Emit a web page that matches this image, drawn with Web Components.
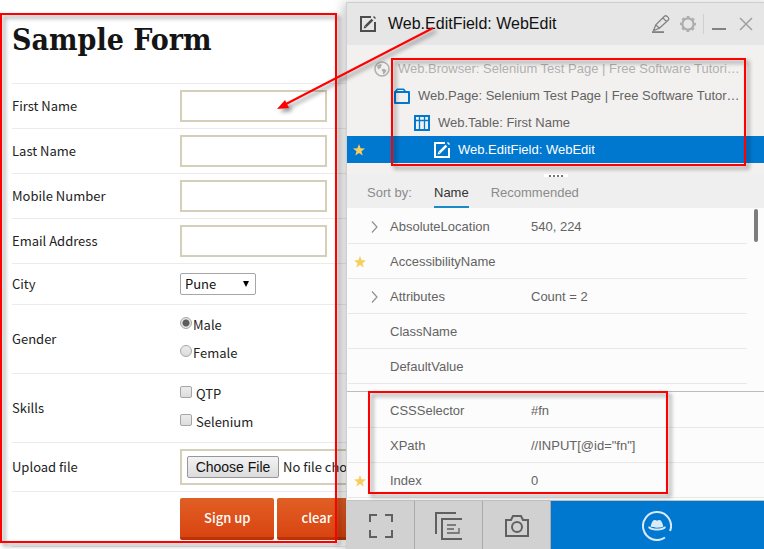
<!DOCTYPE html>
<html lang="en">
<head>
<meta charset="utf-8">
<title>Sample Form</title>
<style>
body { margin: 0; }
</style>
</head>
<body>
<app-desktop>
  <sample-form slot="page">
    <form-row label="First Name"><text-field name="First Name"></text-field></form-row>
    <form-row label="Last Name"><text-field name="Last Name"></text-field></form-row>
    <form-row label="Mobile Number"><text-field name="Mobile Number"></text-field></form-row>
    <form-row label="Email Address"><text-field name="Email Address"></text-field></form-row>
    <form-row label="City"><city-select></city-select></form-row>
    <form-row label="Gender"><choice-group kind="radio" options="Male,Female" checked="Male"></choice-group></form-row>
    <form-row label="Skills"><choice-group kind="checkbox" options="QTP,Selenium"></choice-group></form-row>
    <form-row label="Upload file"><file-field></file-field></form-row>
    <form-row><action-button>Sign up</action-button><action-button>clear</action-button></form-row>
  </sample-form>
  <spy-window slot="tool">
    <spy-header slot="header">Web.EditField: WebEdit</spy-header>
    <object-tree slot="tree">
      <tree-item icon="globe" level="0" faded>Web.Browser: Selenium Test Page | Free Software Tutorials</tree-item>
      <tree-item icon="page" level="1">Web.Page: Selenium Test Page | Free Software Tutorials</tree-item>
      <tree-item icon="table" level="2">Web.Table: First Name</tree-item>
      <tree-item icon="edit" level="3" selected>Web.EditField: WebEdit</tree-item>
    </object-tree>
    <sort-bar slot="sort"></sort-bar>
    <property-list slot="list" kind="all"></property-list>
    <property-list slot="pinned" kind="pinned"></property-list>
    <spy-footer slot="footer"></spy-footer>
  </spy-window>
  <callout-marks slot="marks"></callout-marks>
</app-desktop>

<script>
const ICONS = {
  edit: `<svg viewBox="0 0 16 16" width="16" height="16" fill="none" stroke="currentColor" stroke-width="2"><path d="M11 1H1v14h14V6"/><path d="M5.6 10.4 12.4 3.6" stroke-width="2.6"/><path d="M3.6 12.6l.8-3 2.2 2.2z" fill="currentColor" stroke="none"/><path d="M13 1l2 2 1-1-2-2z" fill="currentColor" stroke="none"/></svg>`,
  globe: `<svg viewBox="0 0 16 16" width="16" height="16"><circle cx="8" cy="8" r="7" fill="none" stroke="currentColor" stroke-width="1.6"/><path d="M3.2 4.6 6.6 3l1.6 1-1.4 1.2.6 1.2-2 1.2-.2 1.2-1.8-1.6zM8 8l2.4-.2 2.2 1.8-1.6 2.6-2 1.2-.2-2.6L7.6 9.4z" fill="currentColor"/></svg>`,
  page: `<svg viewBox="0 0 16 16" width="16" height="16" fill="none" stroke="currentColor" stroke-width="2" stroke-linejoin="round"><path d="M1 4v11h14V4z"/><path d="M1 4 3.4 1.2h6.2L11.6 4" stroke-width="1.6"/></svg>`,
  table: `<svg viewBox="0 0 16 16" width="16" height="16" fill="none" stroke="currentColor"><path d="M1 1h14v14H1z" stroke-width="2"/><path d="M1 5.5h14M5.5 2v13M10.5 2v13" stroke-width="1.3"/></svg>`,
  star: `<svg viewBox="0 0 12 12" width="12" height="12"><path d="M6 0l1.6 4.2 4.4.2-3.5 2.8L9.7 11.6 6 9.1 2.3 11.6l1.2-4.4L0 4.4l4.4-.2z" fill="#f7cd5b"/></svg>`,
  chevron: `<svg viewBox="0 0 7 12" width="7" height="12" fill="none" stroke="#909090" stroke-width="1.2"><path d="M1 0.5 6 6 1 11.5"/></svg>`,
  pencil: `<svg viewBox="0 0 18 18" width="18" height="18" fill="none" stroke="#828282" stroke-width="1.3"><path d="M1.6 15.6l2.2-5.8L12.4 1.2q1.4-1 2.7.2l1 1q1.2 1.3.2 2.7L7.4 13.3zM10.8 2.9l3.9 3.9M3.8 9.9l3.6 3.4"/><path d="M0 17.1h12" stroke-width="1.8"/></svg>`,
  gear: `<svg viewBox="0 0 16 16" width="16" height="16" fill="none" stroke="#adadad"><circle cx="8" cy="8" r="5.6" stroke-width="2.2"/><circle cx="8" cy="8" r="7.1" stroke-width="1.8" stroke-dasharray="2.8 2.776" stroke-dashoffset="1.4"/></svg>`,
  minimize: `<svg viewBox="0 0 14 14" width="14" height="14"><path d="M0 12h14" stroke="#828282" stroke-width="2"/></svg>`,
  close: `<svg viewBox="0 0 14 14" width="14" height="14"><path d="M1 1l12 12M13 1 1 13" stroke="#a2a2a2" stroke-width="1.6"/></svg>`,
  expand: `<svg viewBox="0 0 24 24" width="24" height="24" fill="none" stroke="#606060" stroke-width="2"><path d="M1 8V1h7M16 1h7v7M23 16v7h-7M8 23H1v-7"/></svg>`,
  copies: `<svg viewBox="0 0 28 28" width="28" height="28" fill="none" stroke="#606060" stroke-width="2"><path d="M21 1H1v21M27 7H7v20h20"/><path d="M12 13h9M12 17h7M12 21h9M24 16v5h-3" stroke-width="1.3"/></svg>`,
  camera: `<svg viewBox="0 0 24 22" width="24" height="22" fill="none" stroke="#606060" stroke-width="2"><path d="M1 5h5l2-4h8l2 4h5v16H1z"/><circle cx="12" cy="12" r="5"/></svg>`,
  hat: `<svg viewBox="0 0 30 30" width="30" height="30" fill="#d8e9f7"><path d="M23 26.5A14 14 0 1 1 28.1 20" fill="none" stroke="#d8e9f7" stroke-width="2"/><path d="M8.6 15.5c1-3.5 1.9-6.5 3.900-6.500 1 0 1.500.6 2.500.6s1.500-.6 2.500-.6c2 0 2.900 3 3.900 6.500-3 1.600-9.800 1.600-12.800 0z"/><path d="M6.300 16.500c-.3-1 .8-1.200 2-.5 3.500 2 9.900 2 13.400 0 1.200-.7 2.300-.5 2 .5-.8 4-16.600 4-17.400 0z"/></svg>`
};

const UI_FONT = `"Liberation Sans", Arial, sans-serif`;
const FORM_FONT = `"Noto Sans CJK SC", "Noto Sans", sans-serif`;

function define(name, css, html, setup) {
  const template = document.createElement('template');
  template.innerHTML = `<style>*{box-sizing:border-box}svg{display:block;flex:none}${css}</style>${html}`;
  customElements.define(name, class extends HTMLElement {
    constructor() {
      super();
      this.attachShadow({ mode: 'open' }).append(template.content.cloneNode(true));
    }
    connectedCallback() {
      if (setup && !this.ready) { this.ready = true; setup(this, this.shadowRoot); }
    }
  });
}

define('app-desktop', `
  :host { display: grid; position: relative; grid-template-columns: minmax(0, 346fr) minmax(0, 418fr); min-height: 100vh; overflow: hidden; background: #fff; }
  .tool { display: grid; position: relative; padding-top: 2px; }
  .page { min-width: 0; }
`, `<div class="page"><slot name="page"></slot></div><div class="tool"><slot name="tool"></slot></div><slot name="marks"></slot>`);

/* ---------- form ---------- */
define('sample-form', `
  :host { display: block; padding: 16px 0 0 12px; color: #222; font: 13px/28px ${FORM_FONT}; }
  h1 { margin: 0; height: 67px; font: bold 30px/48px "DejaVu Serif Condensed", "DejaVu Serif", serif; color: #151515; white-space: nowrap; }
`, `<h1>Sample Form</h1><form><slot></slot></form>`);

define('form-row', `
  :host { display: grid; grid-template-columns: 168px 1fr; align-items: center; border-top: 1px solid #ebebeb; padding: 6px 0; }
  :host(:last-of-type) { border-bottom: 1px solid #ebebeb; }
  .controls { display: flex; gap: 3px; min-width: 0; }
`, `<span class="label"></span><div class="controls"><slot></slot></div>`,
  (host, root) => { root.querySelector('.label').textContent = host.getAttribute('label') || ''; });

define('text-field', `
  :host { display: block; }
  input { display: block; width: 147px; height: 32px; border: 2px solid #d3cfb9; background: #fff; padding: 4px 8px; font: inherit; }
`, `<input type="text">`,
  (host, root) => { root.querySelector('input').setAttribute('aria-label', host.getAttribute('name')); });

define('city-select', `
  :host { display: grid; width: 76px; height: 22px; align-items: center; }
  select, svg { grid-area: 1 / 1; }
  select { appearance: none; width: 76px; height: 22px; padding: 0 4px; border: 1px solid #a6a6a6; border-radius: 2px; background: #fff; color: #111; font: 13px/20px ${FORM_FONT}; }
  svg { justify-self: end; margin-right: 6px; pointer-events: none; }
`, `<select aria-label="City"><option>Pune</option></select><svg viewBox="0 0 8 6" width="8" height="6"><path d="M1 0h6L4 6z" fill="#000"/></svg>`);

define('choice-group', `
  :host { display: grid; }
  label { display: flex; align-items: center; height: 28px; }
  input { appearance: none; flex: none; width: 12px; height: 12px; margin: 0 1px 4px 0; border: 1px solid #a6a6a6; background: linear-gradient(#ececec, #dcdcdc); }
  input[type=radio] { border-radius: 50%; }
  input[type=radio]:checked { background: radial-gradient(circle, #5c5c5c 0 3px, #e4e4e4 4px); }
  input[type=checkbox] { border-radius: 2px; margin-right: 4px; }
`, ``, (host, root) => {
  for (const option of host.getAttribute('options').split(',')) {
    const label = document.createElement('label');
    const input = document.createElement('input');
    input.type = host.getAttribute('kind');
    input.name = 'choice';
    input.checked = option === host.getAttribute('checked');
    const text = document.createElement('span');
    text.textContent = option;
    label.append(input, text);
    root.append(label);
  }
});

define('file-field', `
  :host { display: block; }
  input { display: block; width: 240px; height: 36px; padding: 5px; border: 2px solid #d3cfb9; background: #fff; color: #222; font: 13px/22px ${FORM_FONT}; }
  input::file-selector-button { width: 92px; height: 22px; margin: 0 4px 0 0; padding: 0; border: 1px solid #979797; border-radius: 2px; background: linear-gradient(#f3f3f3, #dcdcdc); color: #111; font: 14px/20px ${UI_FONT}; }
`, `<input type="file" aria-label="Upload file">`);

define('action-button', `
  :host { display: block; flex: none; }
  button { display: block; height: 42px; padding: 0 24px; border: 0; border-bottom: 3px solid #b93407; border-radius: 2px; background: linear-gradient(#e15f24, #d94411); color: #fff; font: 500 13px/39px ${FORM_FONT}; white-space: nowrap; }
`, `<button type="button"><slot></slot></button>`);

/* ---------- inspector ---------- */
define('spy-window', `
  :host { display: flex; flex-direction: column; min-width: 0; border: solid #cfcfcf; border-width: 1px 0 0 1px; background: #fcfcfc; box-shadow: 0 4px 10px 3px rgba(0,0,0,.22); color: #636363; font: 13px/16px ${UI_FONT}; }
  slot[name=list]::slotted(*) { flex: 1; }
`, `<slot name="header"></slot><slot name="tree"></slot><slot name="sort"></slot><slot name="list"></slot><slot name="pinned"></slot><slot name="footer"></slot>`);

define('spy-header', `
  :host { display: flex; align-items: center; height: 42px; padding: 0 11px 0 13px; background: #e6e6e6; color: #4d4d4d; }
  h2 { flex: 1; margin: 0 0 0 12px; color: #111; font: 16px/20px ${UI_FONT}; white-space: nowrap; }
  button { display: block; border: 0; padding: 0; background: none; }
  .pencil { margin-right: 10px; }
  .gear { margin-right: 7px; }
  .divider { width: 1px; height: 20px; margin-right: 8px; background: #cfcfcf; }
  .min { margin-right: 13px; }
`, `${ICONS.edit}<h2><slot></slot></h2>
  <button class="pencil" aria-label="Highlight">${ICONS.pencil}</button>
  <button class="gear" aria-label="Settings">${ICONS.gear}</button>
  <span class="divider"></span>
  <button class="min" aria-label="Minimize">${ICONS.minimize}</button>
  <button aria-label="Close">${ICONS.close}</button>`);

define('object-tree', `
  :host { display: block; padding: 10px 0 11px; background: #f3f1f0; }
`, `<slot></slot>`);

define('tree-item', `
  :host { display: flex; align-items: center; height: 27px; padding-right: 22px; }
  :host([faded]) { color: #b0b0b0; --icon: #b0b0b0; }
  :host([selected]) { background: #0078d0; color: #fff; --icon: #fff; }
  .mark { display: flex; width: 27px; padding-left: 6px; flex: none; }
  :host(:not([selected])) .mark svg { display: none; }
  .indent { flex: none; width: calc(var(--level) * 20px); }
  .icon { color: var(--icon, #0078d0); margin-right: 8px; }
  .text { min-width: 0; overflow: hidden; text-overflow: ellipsis; white-space: nowrap; }
`, `<span class="mark">${ICONS.star}</span><span class="indent"></span><span class="icon"></span><span class="text"><slot></slot></span>`,
  (host, root) => {
    host.style.setProperty('--level', host.getAttribute('level'));
    root.querySelector('.icon').innerHTML = ICONS[host.getAttribute('icon')];
  });

define('sort-bar', `
  :host { display: flex; position: relative; align-items: stretch; height: 34px; padding-left: 20px; background: #efefef; color: #8b8b8b; }
  .by { width: 67px; padding-top: 11px; }
  button { padding: 6px 0 0; margin-right: 22px; border: 0; border-bottom: 2px solid transparent; background: none; color: inherit; font: inherit; }
  .on { border-color: #1b8ac8; color: #333; }
  .grip { position: absolute; left: 50%; top: 0; transform: translateX(-50%); width: 24px; height: 3px; background: repeating-linear-gradient(90deg, #777 0 2px, #fff 2px 4px) center / 14px 2px no-repeat #fff; }
`, `<span class="grip"></span><span class="by">Sort by:</span><button class="on">Name</button><button>Recommended</button>`);

const PROPERTIES = {
  all: [['chevron', 'AbsoluteLocation', '540, 224'], ['star', 'AccessibilityName', ''], ['chevron', 'Attributes', 'Count = 2'], ['', 'ClassName', ''], ['', 'DefaultValue', '']],
  pinned: [['', 'CSSSelector', '#fn'], ['', 'XPath', '//INPUT[@id="fn"]'], ['star', 'Index', '0']]
};

define('property-list', `
  :host { display: block; position: relative; }
  :host([kind=all]) { padding: 1px 17px 0 1px; }
  :host([kind=pinned]) { border-top: 1px solid #bdbdbd; padding: 1px 0 2px 1px; }
  table { width: 100%; border-collapse: separate; border-spacing: 0; table-layout: fixed; }
  th, td { height: 35px; padding: 2px 0 0; border-bottom: 1px solid #e8e8e8; font-weight: normal; text-align: left; }
  .flag { width: 42px; }
  .name { width: 141px; }
  .star svg { margin-left: 6px; }
  .chevron svg { margin-left: 23px; }
  .thumb { display: none; position: absolute; top: 1px; right: 6px; width: 4px; height: 33px; border-radius: 2px; background: #7d7d7d; }
  :host([kind=all]) .thumb { display: block; }
`, `<table><colgroup><col class="flag"><col class="name"><col></colgroup><tbody></tbody></table><span class="thumb"></span>`,
  (host, root) => {
    root.querySelector('tbody').innerHTML = PROPERTIES[host.getAttribute('kind')].map(([icon, name, value]) =>
      `<tr><td class="${icon}">${ICONS[icon] || ''}</td><th scope="row">${name}</th><td>${value}</td></tr>`).join('');
  });

define('spy-footer', `
  :host { display: flex; height: 48px; border-top: 1px solid #c4c4c4; background: #d1d1d1; }
  button { display: grid; place-items: center; flex: 68 1 0; min-width: 0; padding: 2px 0 0; border: 0; box-shadow: inset -1px 0 #aaa; background: none; }
  .spy { flex: 214 1 0; box-shadow: none; background: #0078d0; }
`, `<button aria-label="Expand">${ICONS.expand}</button><button aria-label="Copy">${ICONS.copies}</button><button aria-label="Snapshot">${ICONS.camera}</button><button class="spy" aria-label="Spy">${ICONS.hat}</button>`);

/* ---------- annotations over both windows ---------- */
define('callout-marks', `
  :host { position: absolute; inset: 0; pointer-events: none; }
  svg { overflow: hidden; filter: drop-shadow(3px 3px 2px rgba(0,0,0,.45)); }
`, `<svg width="100%" height="100%" fill="none" stroke="#f00" stroke-width="2">
  <path d="M1 14h335v528H1zM392 59h353v106H392zM369 392h298v101H369zM433 28 286 104" />
  <path d="M277 109l8-9 4 8z" fill="#f00" stroke="none"/>
</svg>`);
</script>
</body>
</html>
